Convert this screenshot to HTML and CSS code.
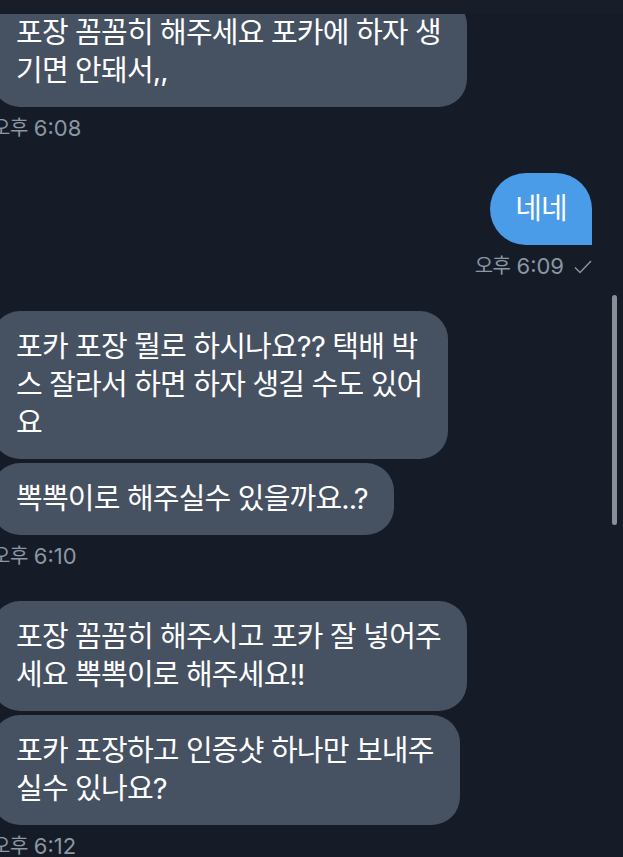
FILE: index.html
```html
<!DOCTYPE html>
<html lang="ko">

<head>
    <meta charset="UTF-8">
    <meta name="viewport" content="width=device-width, initial-scale=1.0">
    <title>쪽지</title>
    <link rel="stylesheet" href="styles.css">
</head>

<body>
    <div class="topbar"></div>
    <div class="scrollbar"></div>

    <main class="chat">
        <section class="group group-in">
            <div class="bubble">포장 꼼꼼히 해주세요 포카에 하자 생<br>기면 안돼서,,</div>
            <div class="time"><span class="ampm">오후</span><span>6:08</span></div>
        </section>

        <section class="group group-out">
            <div class="bubble bubble-out">네네</div>
            <div class="time">
                <span class="ampm">오후</span><span>6:09</span>
                <svg class="check" viewBox="0 0 18 14" width="18" height="14">
                    <polyline points="1,7.5 6,12.5 17,1" />
                </svg>
            </div>
        </section>

        <section class="group group-in">
            <div class="bubble">포카 포장 뭘로 하시나요?? 택배 박<br>스 잘라서 하면 하자 생길 수도 있어<br>요</div>
            <div class="bubble">뽁뽁이로 해주실수 있을까요..?</div>
            <div class="time"><span class="ampm">오후</span><span>6:10</span></div>
        </section>

        <section class="group group-in">
            <div class="bubble">포장 꼼꼼히 해주시고 포카 잘 넣어주<br>세요 뽁뽁이로 해주세요!!</div>
            <div class="bubble">포카 포장하고 인증샷 하나만 보내주<br>실수 있나요?</div>
            <div class="time"><span class="ampm">오후</span><span>6:12</span></div>
        </section>
    </main>
</body>

</html>
```

FILE: styles.css
```css
* {
    margin: 0;
    padding: 0;
    box-sizing: border-box;
}

body {
    font-family: Inter, 'Noto Sans CJK KR', sans-serif;
    background: #151c27;
    height: 857px;
    overflow: hidden;
    position: relative;
}

.topbar {
    position: absolute;
    top: 0;
    left: 0;
    width: 100%;
    height: 14px;
    background: #171e2a;
    z-index: 2;
}

.scrollbar {
    position: absolute;
    top: 295px;
    left: 612px;
    width: 5px;
    height: 230px;
    border-radius: 3px;
    background: #8a8f97;
    z-index: 2;
}

.chat {
    display: flex;
    flex-direction: column;
    gap: 32px;
    margin-top: -3px;
}

.group {
    display: flex;
    flex-direction: column;
    align-items: flex-start;
    gap: 4px;
}

.group-in {
    margin-left: -8px;
}

.group-out {
    align-items: flex-end;
    padding-right: 31px;
}

.bubble {
    background: #465162;
    color: #fff;
    font-size: 29px;
    line-height: 38px;
    letter-spacing: -0.8px;
    padding: 17px 26px 17px 24px;
    border-radius: 28px;
}

.bubble-out {
    background: #4a9be8;
    padding: 17px 25px;
    border-radius: 36px 36px 0 36px;
}

.time {
    display: flex;
    align-items: center;
    gap: 6px;
    margin-top: 5px;
    font-size: 22px;
    line-height: 25px;
    color: #8b97a4;
}

.ampm {
    font-size: 20px;
    letter-spacing: -0.5px;
}

.check {
    margin-left: 4px;
    fill: none;
    stroke: #8b97a4;
    stroke-width: 1.4;
}
```
